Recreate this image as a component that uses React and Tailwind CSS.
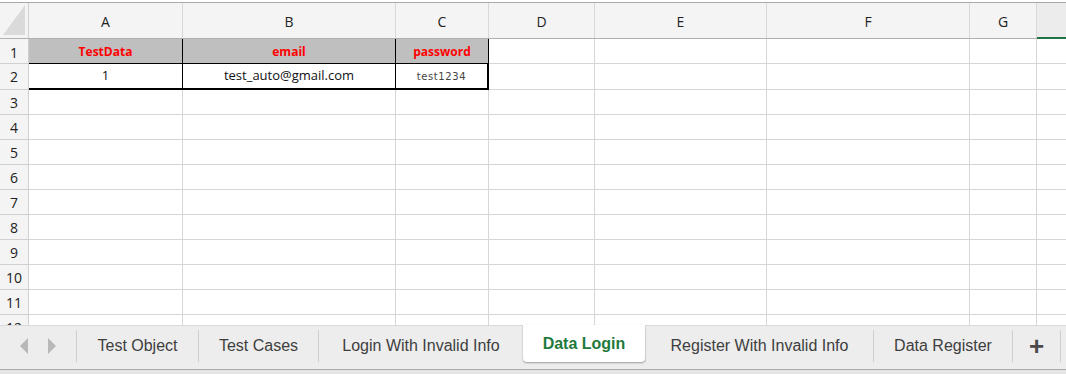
import React from 'react';

const cols = [
  { key: 'A', w: 'w-[154px]' },
  { key: 'B', w: 'w-[213px]' },
  { key: 'C', w: 'w-[93px]' },
  { key: 'D', w: 'w-[106px]' },
  { key: 'E', w: 'w-[172px]' },
  { key: 'F', w: 'w-[203px]' },
  { key: 'G', w: 'w-[67px]' },
];

const tabs = [
  { name: 'Test Object', w: 'w-[122px]' },
  { name: 'Test Cases', w: 'w-[120px]' },
  { name: 'Login With Invalid Info', w: 'w-[205px]' },
  { name: 'Data Login', w: 'w-[122px]', active: true },
  { name: 'Register With Invalid Info', w: 'w-[228px]' },
  { name: 'Data Register', w: 'w-[139px]' },
];

const font = { fontFamily: '"Open Sans", "Liberation Sans", sans-serif' };

function HeaderRow() {
  return (
    <div className="flex h-[36px] border-b border-[#b0b0b0] bg-[#f4f4f4] shrink-0">
      {/* corner */}
      <div className="w-[29px] shrink-0 border-r border-[#d0d0d0] relative">
        <div className="absolute right-[3px] bottom-[3px] w-0 h-0 border-l-[22px] border-l-transparent border-b-[30px] border-b-[#dadada]" />
      </div>
      {cols.map((c) => (
        <div
          key={c.key}
          className={`${c.w} shrink-0 border-r border-[#d8d8d8] flex items-center justify-center text-[14px] text-[#222] pt-[2px]`}
        >
          {c.key}
        </div>
      ))}
      <div className="flex-1 bg-[#ececec] relative">
        <div className="absolute left-0 right-0 bottom-[-1px] h-[2px] bg-[#217346]" />
      </div>
    </div>
  );
}

function Cell({ w, children, className = '' }) {
  return (
    <div className={`${w} shrink-0 border-r border-b border-[#d6d6d6] flex items-center justify-center ${className}`}>
      {children}
    </div>
  );
}

const headCell = 'shrink-0 border-r border-b border-black bg-[#bfbfbf] flex items-center justify-center text-[12px] font-bold text-[#ff0000] pt-[2px]';

function DataRow({ n }) {
  if (n === 1) {
    return (
      <div className="flex h-[25px] shrink-0">
        <div className="w-[29px] shrink-0 border-r border-b border-[#d0d0d0] bg-[#f4f4f4] flex items-center justify-center text-[14px] text-[#222] pt-[2px]">1</div>
        <div className={`w-[154px] ${headCell}`}>TestData</div>
        <div className={`w-[213px] ${headCell}`}>email</div>
        <div className={`w-[93px] ${headCell}`}>password</div>
        {cols.slice(3).map((c) => (
          <Cell key={c.key} w={c.w} />
        ))}
        <div className="flex-1 border-b border-[#d6d6d6]" />
      </div>
    );
  }
  if (n === 2) {
    return (
      <div className="flex h-[26px] shrink-0">
        <div className="w-[29px] shrink-0 border-r border-b border-[#d0d0d0] bg-[#f4f4f4] flex items-center justify-center text-[14px] text-[#222]">2</div>
        <div className="w-[154px] shrink-0 border-r border-b-2 border-black flex items-center justify-center text-[13px] text-[#111]">1</div>
        <div className="w-[213px] shrink-0 border-r border-b-2 border-black flex items-center justify-center text-[13px] text-[#111]">test_auto@gmail.com</div>
        <div
          className="w-[93px] shrink-0 border-r-2 border-b-2 border-black flex items-center justify-center text-[10px] text-[#444] tracking-[0.6px]"
          style={{ fontFamily: '"DejaVu Sans", sans-serif' }}
        >
          test1234
        </div>
        {cols.slice(3).map((c) => (
          <Cell key={c.key} w={c.w} />
        ))}
        <div className="flex-1 border-b border-[#d6d6d6]" />
      </div>
    );
  }
  return (
    <div className="flex h-[25px] shrink-0">
      <div className="w-[29px] shrink-0 border-r border-b border-[#d0d0d0] bg-[#f4f4f4] flex items-center justify-center text-[14px] text-[#222]">
        {n}
      </div>
      {cols.map((c) => (
        <Cell key={c.key} w={c.w} />
      ))}
      <div className="flex-1 border-b border-[#d6d6d6]" />
    </div>
  );
}

function TabBar() {
  return (
    <div
      className="h-[44px] shrink-0 flex bg-[#ededed] border-t border-[#d9d9d9]"
      style={{ fontFamily: '"Liberation Sans", Arial, sans-serif' }}
    >
      <div className="w-[76px] shrink-0 flex items-center justify-center gap-[20px] pb-[4px]">
        <div className="w-0 h-0 border-y-[8px] border-y-transparent border-r-[8px] border-r-[#b8b8b8]" />
        <div className="w-0 h-0 border-y-[8px] border-y-transparent border-l-[8px] border-l-[#b8b8b8]" />
      </div>
      {tabs.map((t) =>
        t.active ? (
          <div
            key={t.name}
            className={`${t.w} shrink-0 h-[37px] -mt-px bg-white rounded-b-[4px] shadow-[0_1px_2px_rgba(0,0,0,0.35)] flex items-center justify-center text-[16px] font-bold text-[#1d7a3c]`}
          >
            {t.name}
          </div>
        ) : (
          <div key={t.name} className={`${t.w} shrink-0 flex items-start pt-[4px]`}>
            <div className="h-[32px] w-full border-l border-[#cfcfcf] flex items-center justify-center text-[16px] text-[#3e3e3e]">
              {t.name}
            </div>
          </div>
        )
      )}
      <div className="w-[49px] shrink-0 flex items-start pt-[4px]">
        <div className="h-[32px] w-full border-l border-r border-[#cfcfcf] flex items-center justify-center text-[26px] font-bold text-[#4a4a4a] leading-none">
          +
        </div>
      </div>
    </div>
  );
}

export default function App() {
  return (
    <div className="w-[1066px] h-[374px] bg-white flex flex-col overflow-hidden" style={font}>
      <div className="h-[2px] bg-white shrink-0" />
      <div className="h-px bg-[#a8a8a8] shrink-0" />
      <HeaderRow />
      <div className="flex-1 overflow-hidden flex flex-col">
        {[1, 2, 3, 4, 5, 6, 7, 8, 9, 10, 11, 12].map((n) => (
          <DataRow key={n} n={n} />
        ))}
      </div>
      <TabBar />
      <div className="h-px bg-[#a9a9a9] shrink-0" />
      <div className="flex-1 min-h-[4px] max-h-[4px] bg-[#e6e6e6] shrink-0" />
    </div>
  );
}
